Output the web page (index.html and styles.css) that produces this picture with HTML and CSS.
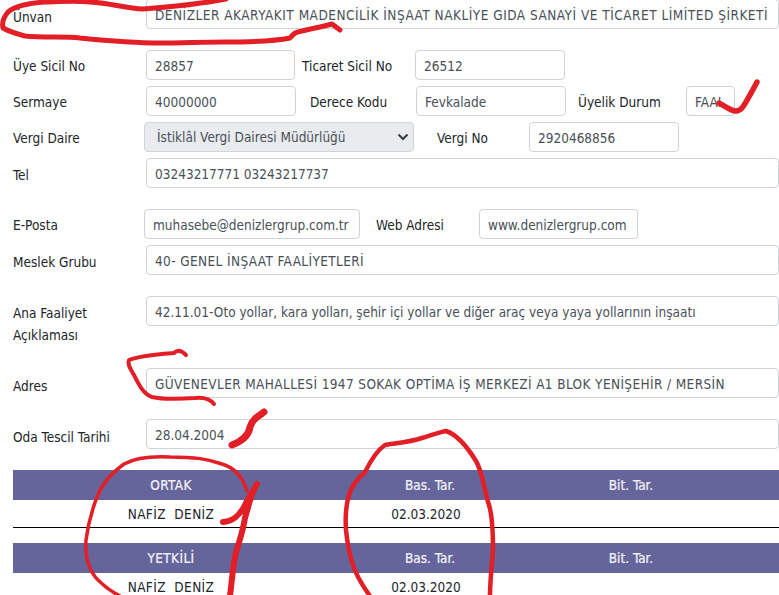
FILE: index.html
```html
<!DOCTYPE html>
<html lang="tr">
<head>
<meta charset="utf-8">
<title>Üye Bilgileri</title>
<link rel="stylesheet" href="styles.css">
</head>
<body>
<div class="page">
  <form class="form">
    <div class="row r-unvan"><label class="lab lab-lower">Ünvan</label><div class="field grow caps-wide">DENİZLER AKARYAKIT MADENCİLİK İNŞAAT NAKLİYE GIDA SANAYİ VE TİCARET LİMİTED ŞİRKETİ</div></div>
    <div class="row r-sicil"><label class="lab">Üye Sicil No</label><div class="field w149">28857</div><label class="mid m-ticaret">Ticaret Sicil No</label><div class="field w150">26512</div></div>
    <div class="row r-std"><label class="lab">Sermaye</label><div class="field w150">40000000</div><label class="mid m-derece">Derece Kodu</label><div class="field w150">Fevkalade</div><label class="mid m-uyelik">Üyelik Durum</label><div class="field w49">FAAL</div></div>
    <div class="row r-std"><label class="lab lab-short">Vergi Daire</label><div class="select">İstiklâl Vergi Dairesi Müdürlüğü<svg class="chev" viewBox="0 0 12 8" width="12" height="8"><path d="M1.5 1.5 6 6l4.500-4.500" fill="none" stroke="#343a40" stroke-width="2"/></svg></div><label class="mid m-vergi">Vergi No</label><div class="field w150">2920468856</div></div>
    <div class="row r-std"><label class="lab lab-low">Tel</label><div class="field grow">03243217771 03243217737</div></div>
    <div class="row r-posta"><label class="lab lab-short">E-Posta</label><div class="field w216">muhasebe@denizlergrup.com.tr</div><label class="mid m-web">Web Adresi</label><div class="field w159">www.denizlergrup.com</div></div>
    <div class="row r-std"><label class="lab lab-low">Meslek Grubu</label><div class="field grow caps">40- GENEL İNŞAAT FAALİYETLERİ</div></div>
    <div class="row r-faaliyet"><label class="lab lab-two">Ana Faaliyet Açıklaması</label><div class="field grow">42.11.01-Oto yollar, kara yolları, şehir içi yollar ve diğer araç veya yaya yollarının inşaatı</div></div>
    <div class="row r-adres"><label class="lab lab-lower">Adres</label><div class="field grow caps">GÜVENEVLER MAHALLESİ 1947 SOKAK OPTİMA İŞ MERKEZİ A1 BLOK YENİŞEHİR / MERSİN</div></div>
    <div class="row r-oda"><label class="lab lab-lower">Oda Tescil Tarihi</label><div class="field grow">28.04.2004</div></div>
  </form>

  <section class="list list-first">
    <div class="thead"><span class="caps">ORTAK</span><span>Bas. Tar.</span><span>Bit. Tar.</span></div>
    <div class="tbody"><span class="caps">NAFİZ&nbsp; DENİZ</span><span>02.03.2020</span></div>
  </section>
  <section class="list">
    <div class="thead"><span class="caps">YETKİLİ</span><span>Bas. Tar.</span><span>Bit. Tar.</span></div>
    <div class="tbody"><span class="caps">NAFİZ&nbsp; DENİZ</span><span>02.03.2020</span></div>
  </section>
</div>

<svg class="ink" viewBox="0 0 779 595" width="779" height="595" aria-hidden="true">
  <g fill="none" stroke="#e21f26" stroke-linecap="round" stroke-linejoin="round">
    <path stroke-width="5" d="M226 -1C200 4 170 7 143 9C125 8 110 3 90 2C70 0 60 2 45 2C30 3 15 6 8 12C3 18 2 24 3 28C8 31 14 33 25 36C45 38 65 36 80 38C110 41 140 43 160 43C180 43 205 42 225 42C250 42 275 41 290 38C294 33 296 32 302 31C315 28 325 26 332 24L340 30"/>
    <path stroke-width="5.500" d="M719 103C725 106 730 110 735 111C741 111 743 107 746 102C750 95 754 88 757 82"/>
    <path stroke-width="4" d="M186 355C182 351 178 349 174 353C160 354 142 355 129 360C127 364 130 368 134 375C138 383 143 394 152 397C165 400 180 399 195 398C205 397 210 399 214 404"/>
    <path stroke-width="7" d="M264 412C257 417 252 420 250 427C249 434 245 440 232 445"/>
    <path stroke-width="3.500" d="M247 491C243 478 236 468 222 464C208 459 195 457 170 457C150 456 135 458 124 464C112 473 103 482 97 497C92 510 88 525 86 540C85 555 88 570 98 580C105 587 112 592 120 596"/>
    <path stroke-width="6" d="M223 522C232 522 240 515 245 505C248 498 253 492 257 484C252 490 249 505 245 518C243 530 240 540 236 552C233 565 232 580 230 596"/>
    <path stroke-width="4.500" d="M370 596C362 585 355 573 352 562C349 552 347 540 346 530C345 515 346 505 349 495C352 485 358 478 365 472C370 462 376 451 385 445C397 443 410 442 422 438C432 435 440 432 446 431C458 435 468 448 476 461C483 473 484 490 489 505C493 518 493 535 493 550C492 565 490 580 490 596"/>
  </g>
</svg>
</body>
</html>
```

FILE: styles.css
```css
* { box-sizing: border-box; }
html, body { margin: 0; padding: 0; background: #fff; }
body {
  width: 779px;
  height: 595px;
  overflow: hidden;
  position: relative;
  font-family: "DejaVu Sans", sans-serif;
  font-stretch: condensed;
  font-size: 13.500px;
  color: #212529;
}
.page { padding-left: 13px; }
.form { margin-top: -1px; }
.row { display: flex; align-items: flex-start; height: 30px; }
.r-sicil { margin-top: 21px; }
.r-std { margin-top: 6px; }
.r-posta { margin-top: 21px; }
.r-faaliyet { margin-top: 21px; }
.r-adres { margin-top: 42px; }
.r-oda { margin-top: 21px; }
.lab { width: 133px; flex: none; line-height: 32px; }
.lab-short { width: 131px; }
.lab-low { line-height: 34px; }
.lab-lower { line-height: 36px; }
.lab-two { line-height: 22px; padding-top: 6px; height: 52px; }
.mid { flex: none; line-height: 32px; }
.m-ticaret { margin: 0 21px 0 7px; width: 92px; white-space: nowrap; }
.m-derece { margin: 0 22px 0 14px; width: 84px; white-space: nowrap; }
.m-uyelik { margin: 0 25px 0 12px; width: 83px; white-space: nowrap; }
.m-vergi { margin: 0 39px 0 23px; width: 53px; white-space: nowrap; }
.m-web { margin: 0 33px 0 16px; width: 70px; white-space: nowrap; }
.field {
  flex: none;
  height: 30px;
  padding: 0 8px;
  border: 1px solid #ced4da;
  border-radius: 4px;
  background: #fff;
  color: #495057;
  line-height: 30px;
  white-space: nowrap;
  overflow: hidden;
}
.caps { letter-spacing: 0.380px; }
.caps-wide { letter-spacing: 0.500px; }
.grow { width: 633px; }
.w49 { width: 49px; }
.w149 { width: 149px; }
.w150 { width: 150px; }
.w159 { width: 159px; }
.w216 { width: 216px; }
.select {
  flex: none;
  width: 270px;
  height: 30px;
  padding: 0 13px 0 12px;
  border: 1px solid #ced4da;
  border-radius: 4px;
  background: #e9ecef;
  color: #495057;
  line-height: 30px;
  display: flex;
  align-items: center;
  justify-content: space-between;
  white-space: nowrap;
}
.chev { margin-right: -9px; }
.list-first { margin-top: 21px; border-bottom: 1px solid #000; height: 58px; margin-bottom: 15px; }
.thead, .tbody {
  display: grid;
  text-align: center;
  white-space: nowrap;
}
.thead { grid-template-columns: 316px 202px 200px; height: 30px; line-height: 30px; background: #65659b; color: #f4f4f8; -webkit-text-stroke: 0.200px #f4f4f8; }
.tbody { grid-template-columns: 316px 194px; height: 27px; line-height: 28px; color: #212529; }
.ink { position: absolute; left: 0; top: 0; pointer-events: none; }
```
